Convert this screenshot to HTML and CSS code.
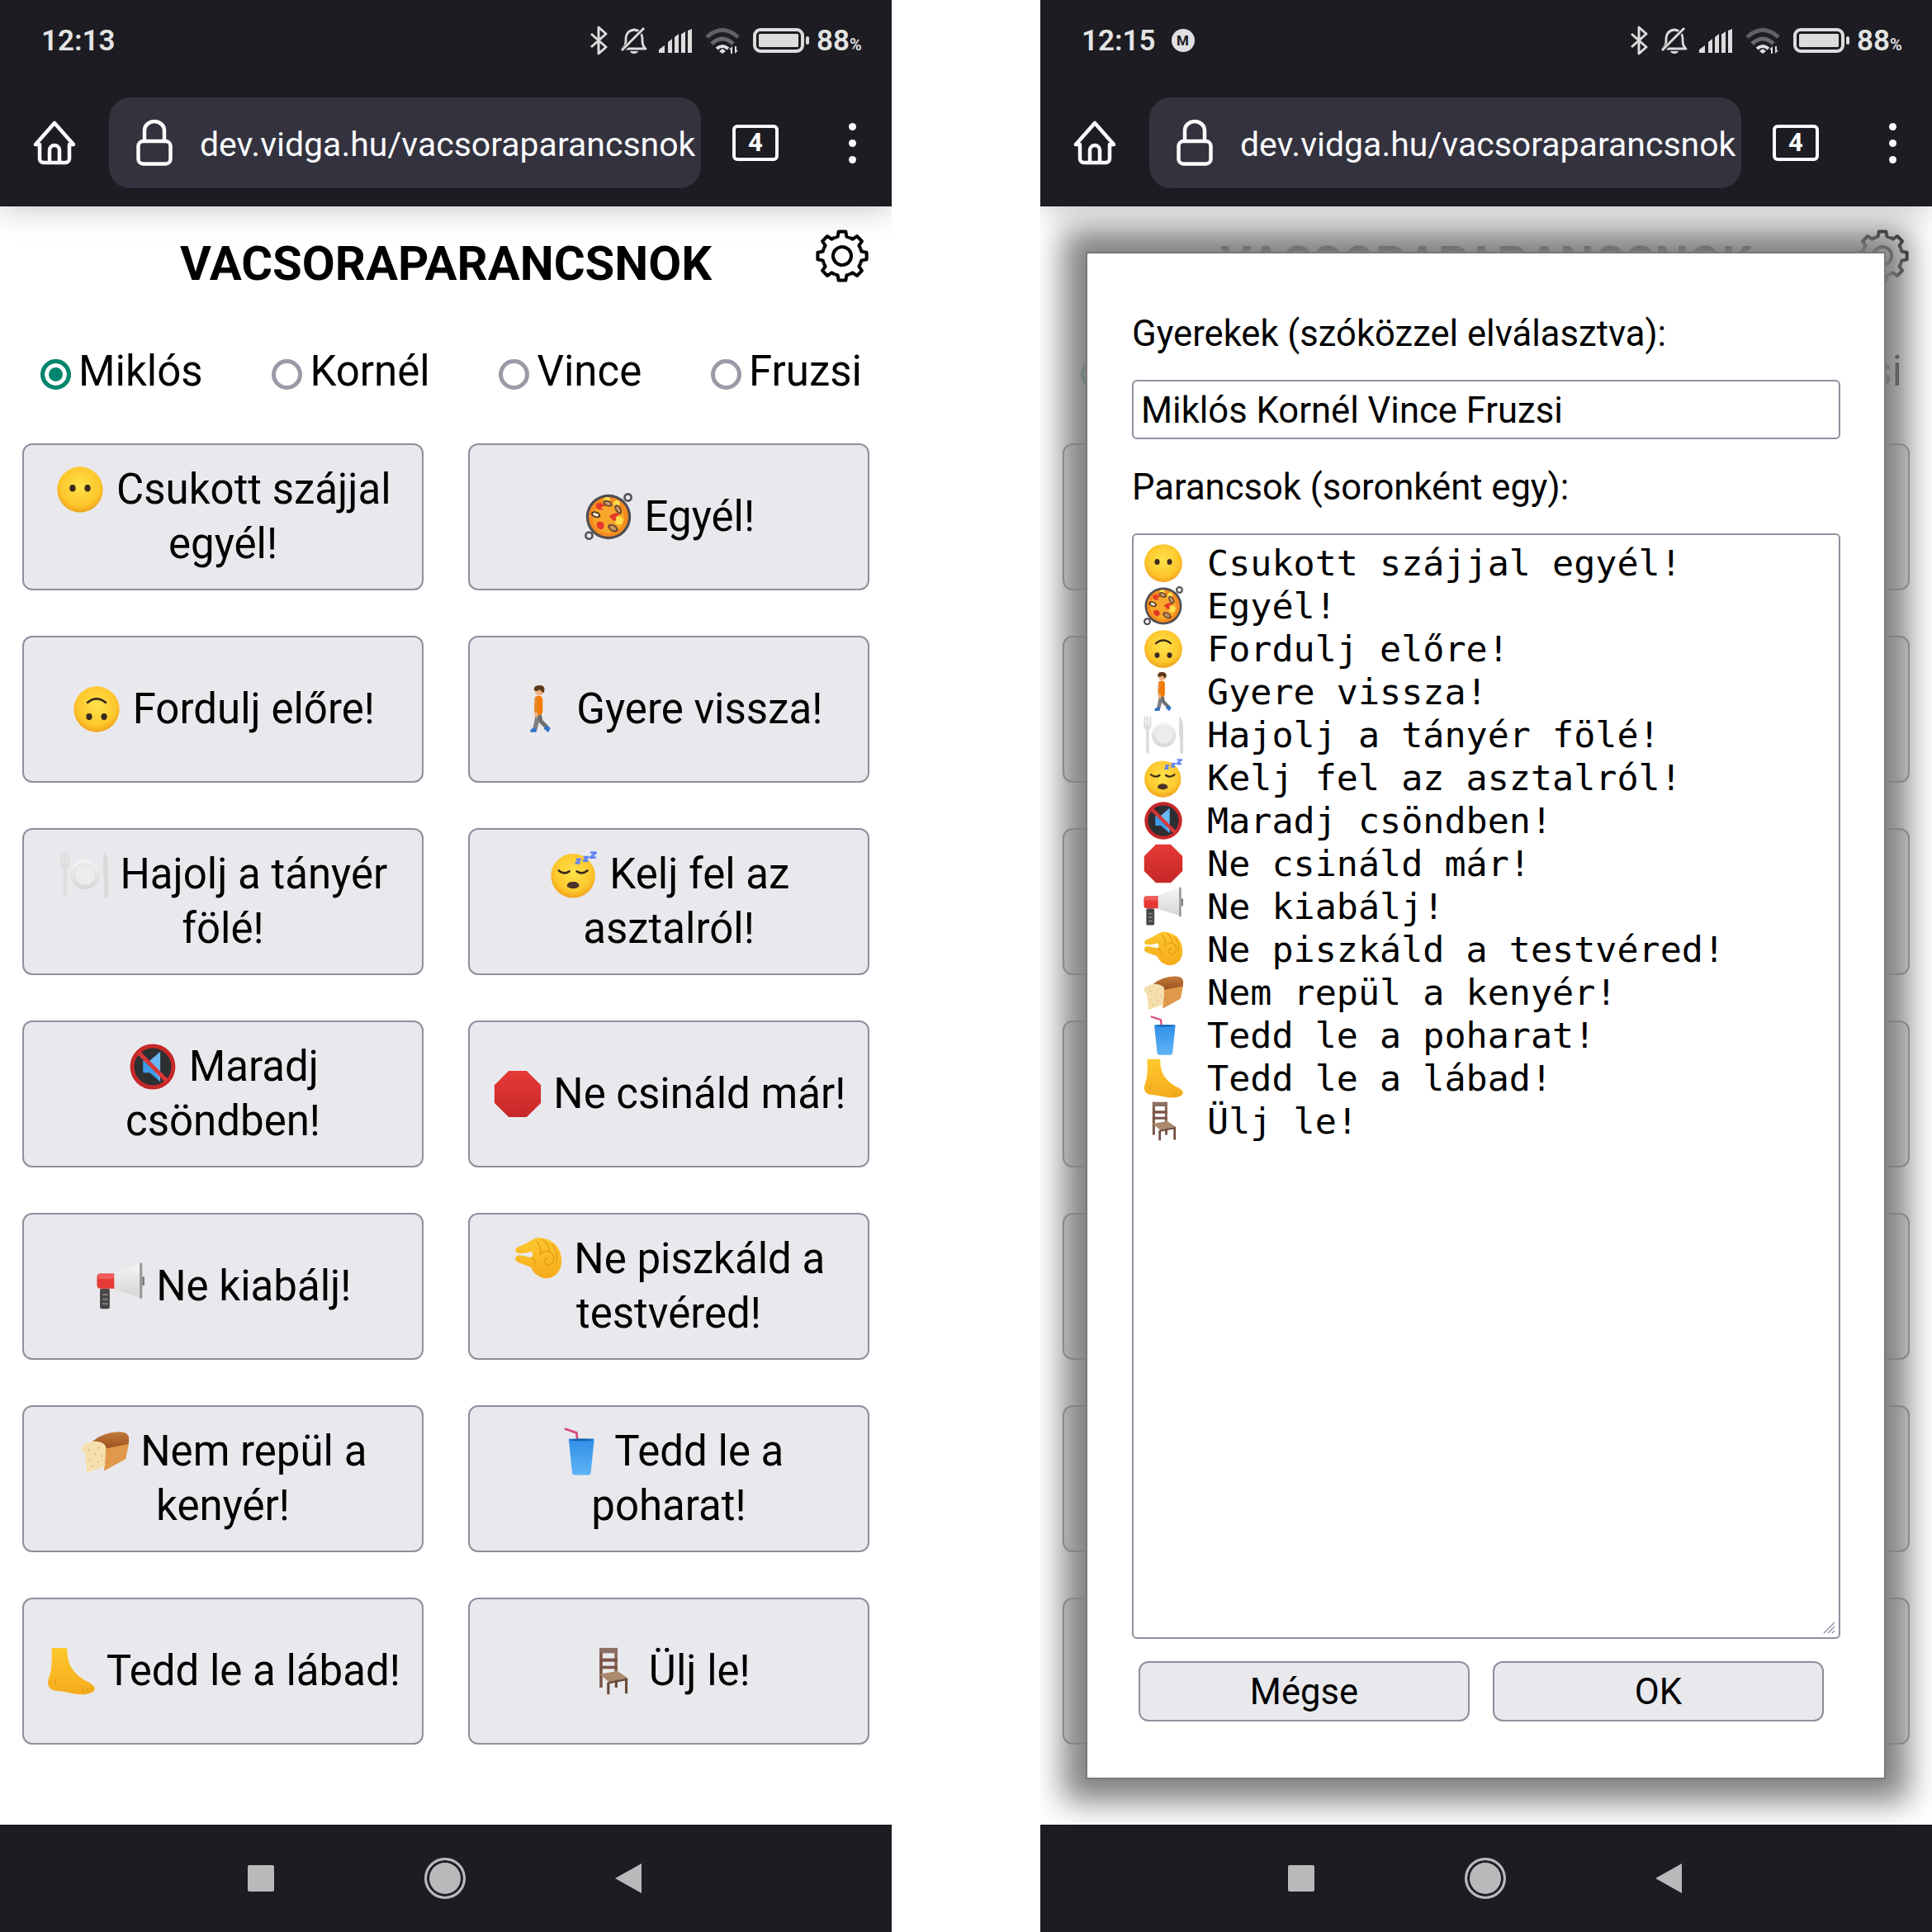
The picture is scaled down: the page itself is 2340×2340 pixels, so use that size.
FILE: index.html
```html
<!DOCTYPE html>
<html lang="hu">
<head>
<meta charset="utf-8">
<title>Vacsoraparancsnok</title>
<link rel="stylesheet" href="styles.css">
</head>
<body>
<svg class="sprite" xmlns="http://www.w3.org/2000/svg">
  <defs>
    <radialGradient id="fy" cx="50%" cy="42%" r="60%"><stop offset="0" stop-color="#ffe24a"/><stop offset=".72" stop-color="#fdc72c"/><stop offset="1" stop-color="#f09c1a"/></radialGradient>
    <linearGradient id="rd" x1="0" y1="0" x2="0" y2="1"><stop offset="0" stop-color="#e53935"/><stop offset="1" stop-color="#c62828"/></linearGradient>
    <linearGradient id="bl" x1="0" y1="0" x2="0" y2="1"><stop offset="0" stop-color="#2f8fe8"/><stop offset="1" stop-color="#5fb4f5"/></linearGradient>
    <linearGradient id="cr" x1="0" y1="0" x2="0" y2="1"><stop offset="0" stop-color="#c27a3a"/><stop offset="1" stop-color="#9c5220"/></linearGradient>
    <linearGradient id="ft" x1="0" y1="0" x2="0" y2="1"><stop offset="0" stop-color="#fdc82e"/><stop offset="1" stop-color="#f5ab1c"/></linearGradient>
    <linearGradient id="hr" x1="0" y1="0" x2="0" y2="1"><stop offset="0" stop-color="#f5f5f5"/><stop offset="1" stop-color="#d6d6d6"/></linearGradient>
    <symbol id="e-mute" viewBox="0 0 128 128"><circle cx="64" cy="64" r="61" fill="url(#fy)"/><ellipse cx="44" cy="60" rx="8" ry="9.5" fill="#3a2a20"/><ellipse cx="84" cy="60" rx="8" ry="9.5" fill="#3a2a20"/></symbol>
    <symbol id="e-paella" viewBox="0 0 128 128"><circle cx="12" cy="114" r="9" fill="none" stroke="#55555a" stroke-width="6"/><circle cx="116" cy="12" r="9" fill="none" stroke="#55555a" stroke-width="6"/><circle cx="64" cy="64" r="60" fill="#4e4e52"/><circle cx="64" cy="64" r="53" fill="#f58a1f"/><circle cx="64" cy="66" r="42" fill="#f7a72a"/><circle cx="92" cy="74" r="11" fill="#fde04b"/><circle cx="60" cy="20" r="9" fill="#fde04b"/><circle cx="86" cy="28" r="8" fill="#fde04b"/><path d="M30 30q16-8 26 6q-8-2-12 4q2 4 8 4q-14 4-20-4zM66 62q14-12 28-6q-6 6-12 8q4 2 2 10q-10 2-12-6q-4 0-6-6zM34 78q14-4 18 6q2 8-6 14q-10-2-14-10q0-6 2-10z" fill="#e5382b"/><ellipse cx="62" cy="28" rx="13" ry="8" fill="#6b4630" transform="rotate(20 62 28)"/><ellipse cx="62" cy="28" rx="8" ry="4" fill="#c9986a" transform="rotate(20 62 28)"/><ellipse cx="90" cy="44" rx="14" ry="8" fill="#6b4630" transform="rotate(60 90 44)"/><ellipse cx="90" cy="44" rx="9" ry="4" fill="#c9986a" transform="rotate(60 90 44)"/><ellipse cx="30" cy="58" rx="13" ry="8" fill="#4e3526" transform="rotate(20 30 58)"/><ellipse cx="30" cy="58" rx="8" ry="4" fill="#fff0d0" transform="rotate(20 30 58)"/><ellipse cx="76" cy="94" rx="15" ry="9" fill="#6b4630" transform="rotate(30 76 94)"/><ellipse cx="76" cy="94" rx="9" ry="5" fill="#c9986a" transform="rotate(30 76 94)"/></symbol>
    <symbol id="e-upside" viewBox="0 0 128 128"><circle cx="64" cy="64" r="61" fill="url(#fy)"/><ellipse cx="44" cy="84" rx="8" ry="9" fill="#3a2a20"/><ellipse cx="84" cy="84" rx="8" ry="9" fill="#3a2a20"/><path d="M40 46q24-20 48 0" fill="none" stroke="#3a2a20" stroke-width="6" stroke-linecap="round"/></symbol>
    <symbol id="e-walk" viewBox="0 0 128 128"><path d="M56 78L52 102L48 118" fill="none" stroke="#7f7f7f" stroke-width="12" stroke-linecap="round" stroke-linejoin="round"/><path d="M60 78L64 96L82 114" fill="none" stroke="#6f6f6f" stroke-width="11" stroke-linecap="round" stroke-linejoin="round"/><path d="M36 120q2-6 16-6v11H36zM78 108l12 6l-6 12q-6-4-12-10z" fill="#2f74c8"/><rect x="48" y="28" width="21" height="52" rx="10" fill="#f57c00"/><path d="M52 34L50 60L52 76" fill="none" stroke="#e5892f" stroke-width="8" stroke-linecap="round"/><path d="M52 76L52 82" stroke="#f2b183" stroke-width="8" stroke-linecap="round"/><circle cx="60" cy="15" r="12" fill="#f2b183"/><path d="M46 14q-2-14 14-14q14 0 14 12q-1 8-6 8q-2-8-10-8q-2 6-12 2z" fill="#5d3a1a"/></symbol>
    <symbol id="e-plate" viewBox="0 0 128 128"><path d="M1 8q0-4 3-4t3 4v24h3V6q0-3 3-3t3 3v26h3V8q0-4 3-4t3 4v26q0 10-7 13v72q0 6-5 6t-5-6V47q-8-3-8-13z" fill="#dedede"/><circle cx="66" cy="64" r="40" fill="url(#hr)"/><circle cx="66" cy="64" r="29" fill="#ececec" stroke="#dcdcdc" stroke-width="2"/><path d="M116 4q12 8 12 44v72q0 6-5 6t-5-6V72h-3q-1-40 1-68z" fill="#d9d9d9"/></symbol>
    <symbol id="e-sleep" viewBox="0 0 128 128"><circle cx="62" cy="68" r="59" fill="url(#fy)"/><path d="M24 54q14 12 28 2M72 56q14 10 28-2" fill="none" stroke="#3a2a20" stroke-width="6" stroke-linecap="round"/><path d="M46 98q0-14 16-14t16 14q-8-4-16-4t-16 4z" fill="#4a3328"/><ellipse cx="62" cy="93" rx="16" ry="9" fill="#4a3328"/><path d="M70 24h11l-11 10h11M90 18h12l-12 10h12M108 6h15l-15 13h15" fill="none" stroke="#6585f2" stroke-width="6" stroke-linejoin="round"/></symbol>
    <symbol id="e-muted" viewBox="0 0 128 128"><circle cx="64" cy="64" r="55" fill="#2d2f33" stroke="#c62828" stroke-width="11"/><path d="M38 48h18l28-24v80L56 80H38z" fill="#3f9be8"/><path d="M56 48l28-24v80z" fill="#6bb8f3"/><path d="M26 26L102 102" stroke="#d93636" stroke-width="11"/></symbol>
    <symbol id="e-stop" viewBox="0 0 128 128"><path d="M40 2h48l38 38v48l-38 38H40L2 88V40z" fill="url(#rd)"/></symbol>
    <symbol id="e-mega" viewBox="0 0 128 128"><rect x="9" y="70" width="26" height="54" rx="5" fill="#454545"/><path d="M16 84h14v5H16zM16 96h14v5H16zM16 108h14v5H16z" fill="#7d7d7d"/><path d="M1 40q0-10 10-10h38v40H11q-10 0-10-10z" fill="#e53935"/><path d="M6 32h43v12H4q0-8 2-12z" fill="#ef5d5a"/><path d="M47 28L118 2v92L47 72z" fill="url(#hr)"/><rect x="115" y="1" width="7" height="96" rx="3" fill="#9a9a9a"/><rect x="122" y="38" width="6" height="24" rx="1" fill="#7d7d7d"/></symbol>
    <symbol id="e-pinch" viewBox="0 0 128 128"><path d="M3 42Q2 34 12 31Q30 24 45 14Q60 4 76 8Q110 14 122 44Q132 76 118 98Q100 120 76 114Q54 108 44 86Q30 80 12 74Q0 68 3 60Q6 52 18 54L46 60Q52 50 46 44Q24 50 10 48Q4 47 3 42Z" fill="url(#ft)"/><path d="M58 16Q72 28 70 48M76 12Q92 24 94 44M68 52Q84 36 100 48Q112 62 100 76Q86 84 80 72Q80 62 90 62M46 60Q56 66 58 78M100 24Q118 44 112 72" fill="none" stroke="#e89d18" stroke-width="3.5" stroke-linecap="round"/></symbol>
    <symbol id="e-bread" viewBox="0 0 128 128"><path d="M66 52L128 42L120 84L62 116z" fill="#e0984a"/><path d="M30 38Q50 20 80 14Q112 8 124 18Q132 28 127 44L66 56Q64 46 50 40z" fill="url(#cr)"/><path d="M2 54Q4 44 20 40Q44 32 62 44Q70 52 66 60L64 104L16 120L10 68Q2 64 2 54Z" fill="#f6dfae"/><g fill="#d6a862"><circle cx="22" cy="60" r="2"/><circle cx="38" cy="72" r="2"/><circle cx="24" cy="88" r="2"/><circle cx="48" cy="54" r="2"/><circle cx="46" cy="92" r="2"/><circle cx="30" cy="104" r="2"/><circle cx="56" cy="76" r="2"/></g></symbol>
    <symbol id="e-cup" viewBox="0 0 128 128"><path d="M58 34L56 14L26 4" fill="none" stroke="#d8487e" stroke-width="6" stroke-linejoin="round" stroke-linecap="round"/><path d="M35 32q0-2 3-2h62q3 0 3 2l-9 88q-1 7-8 7H52q-7 0-8-7z" fill="url(#bl)"/><ellipse cx="69" cy="33" rx="30" ry="3" fill="#1565a8"/></symbol>
    <symbol id="e-foot" viewBox="0 0 128 128"><path d="M12 2H50Q54 2 54 8Q54 36 66 56Q78 74 100 88Q124 98 128 110Q128 122 104 126Q90 128 70 124Q40 118 18 116Q2 110 2 94Q4 80 10 66Q14 40 12 2Z" fill="url(#ft)"/><path d="M94 110q2 8 6 12M106 110q0 6 4 10M117 110q0 4 2 8M24 86q-6 6 0 12" fill="none" stroke="#e39a13" stroke-width="3" stroke-linecap="round"/></symbol>
    <symbol id="e-chair" viewBox="0 0 128 128"><rect x="70" y="78" width="7" height="30" fill="#6b4a3b"/><rect x="29" y="2" width="8" height="106" fill="#7a5546"/><rect x="69" y="2" width="8" height="68" fill="#8a6656"/><rect x="29" y="2" width="48" height="14" fill="#8d6e63"/><rect x="29" y="30" width="48" height="9" fill="#7a5546"/><rect x="29" y="50" width="48" height="8" fill="#7a5546"/><path d="M29 72L77 64L104 82L53 92z" fill="#ad8a6c"/><path d="M53 92L104 82V88L53 98z" fill="#6b4a3b"/><rect x="49" y="94" width="7" height="32" fill="#6b4a3b"/><rect x="97" y="86" width="7" height="38" fill="#6b4a3b"/></symbol>
    <symbol id="i-gear" viewBox="0 0 66 66"><path id="t0" d="M23.8 10.8L27.6 9.6L28.7 3.4L37.3 3.4L38.4 9.6L42.2 10.8" fill="none" stroke="currentColor" stroke-width="4" stroke-linejoin="round"/><use href="#t0" transform="rotate(45 33 33)"/><use href="#t0" transform="rotate(90 33 33)"/><use href="#t0" transform="rotate(135 33 33)"/><use href="#t0" transform="rotate(180 33 33)"/><use href="#t0" transform="rotate(225 33 33)"/><use href="#t0" transform="rotate(270 33 33)"/><use href="#t0" transform="rotate(315 33 33)"/><circle cx="33" cy="33" r="11" fill="none" stroke="currentColor" stroke-width="4"/></symbol>
    <symbol id="i-bt" viewBox="0 0 23 36"><path d="M2 10L20 26L11 34V2L20 10L2 26" fill="none" stroke="#dcdcdc" stroke-width="3" stroke-linejoin="round"/></symbol>
    <symbol id="i-bell" viewBox="0 0 32 34"><path d="M2 27q4-3 4-10V14Q7 5 16 4q9 1 10 10v3q0 7 4 10z" fill="none" stroke="#dcdcdc" stroke-width="2.8" stroke-linejoin="round"/><path d="M11 30h10q-1 3-5 3t-5-3z" fill="#dcdcdc"/><path d="M1 30L29 1" stroke="#1c1c22" stroke-width="5"/><path d="M1 29L28 2" stroke="#dcdcdc" stroke-width="2.8"/></symbol>
    <symbol id="i-signal" viewBox="0 0 40 29"><path d="M0 29v-4l7-5v9zM11 29V16l5-4v17zM19 29V10l5-4v23zM27 29V6h1l4-3v26zM35 29V2l5-2v29z" fill="#dcdcdc"/></symbol>
    <symbol id="i-wifi" viewBox="0 0 43 31"><path d="M2 11Q21-6 40 11" fill="none" stroke="#606066" stroke-width="5"/><path d="M8 19Q21 7 34 19" fill="none" stroke="#68686e" stroke-width="5"/><path d="M14 25Q21 19 28 25" fill="none" stroke="#e0e0e0" stroke-width="4"/><path d="M17 28l4-3l4 3l-4 3z" fill="#e0e0e0"/><path d="M33 22v9h-2v-5h-2zM36 31v-9h2v5h2z" fill="#dcdcdc"/></symbol>
    <symbol id="i-bat" viewBox="0 0 68 30"><rect x="2" y="2" width="58" height="26" rx="7" fill="none" stroke="#dcdcdc" stroke-width="4"/><rect x="7" y="7" width="48" height="16" rx="1.5" fill="#dcdcdc"/><rect x="64" y="10" width="4" height="10" rx="2" fill="#dcdcdc"/></symbol>
    <symbol id="i-home" viewBox="0 0 54 54"><path d="M27 3L4 29H9V46a5 5 0 0 0 5 5H40a5 5 0 0 0 5-5V29H50z" fill="none" stroke="#fbfbfe" stroke-width="4.5" stroke-linejoin="round"/><path d="M21 51V36a6 6 0 0 1 12 0V51" fill="none" stroke="#fbfbfe" stroke-width="4.5"/></symbol>
    <symbol id="i-lock" viewBox="0 0 44 56"><rect x="2.5" y="26" width="39" height="27.5" rx="6" fill="none" stroke="#fbfbfe" stroke-width="4.5"/><path d="M10 26V13a12 11 0 0 1 24 0V26" fill="none" stroke="#fbfbfe" stroke-width="4.5"/></symbol>
    <symbol id="i-rez" viewBox="0 0 15 15"><path d="M1 14L14 1M6 14L14 6M11 14L14 11" stroke="#8f8f9d" stroke-width="1.4"/></symbol>
  </defs>
</svg>

<div class="screens">

<section class="phone">
  <header class="chrome">
    <div class="status">
      <div class="status-left"><span class="time">12:13</span></div>
      <div class="status-right">
        <svg class="ic-bt"><use href="#i-bt"/></svg>
        <svg class="ic-bell"><use href="#i-bell"/></svg>
        <svg class="ic-signal"><use href="#i-signal"/></svg>
        <svg class="ic-wifi"><use href="#i-wifi"/></svg>
        <svg class="ic-bat"><use href="#i-bat"/></svg>
        <span class="pct">88<small>%</small></span>
      </div>
    </div>
    <div class="toolbar">
      <svg class="ic-home"><use href="#i-home"/></svg>
      <div class="urlbar"><svg class="ic-lock"><use href="#i-lock"/></svg><span class="url">dev.vidga.hu/vacsoraparancsnok</span></div>
      <span class="tabs">4</span>
      <div class="dots"><i></i><i></i><i></i></div>
    </div>
  </header>
  <main class="app">
    <h1 class="title">VACSORAPARANCSNOK</h1>
    <svg class="gear"><use href="#i-gear"/></svg>
    <div class="kids">
      <label class="kid"><input type="radio" name="a" checked>Miklós</label>
      <label class="kid"><input type="radio" name="a">Kornél</label>
      <label class="kid"><input type="radio" name="a">Vince</label>
      <label class="kid"><input type="radio" name="a">Fruzsi</label>
    </div>
    <div class="cmds">
      <button class="cmd"><svg class="emo"><use href="#e-mute"/></svg> Csukott szájjal egyél!</button>
      <button class="cmd"><svg class="emo"><use href="#e-paella"/></svg> Egyél!</button>
      <button class="cmd"><svg class="emo"><use href="#e-upside"/></svg> Fordulj előre!</button>
      <button class="cmd"><svg class="emo"><use href="#e-walk"/></svg> Gyere vissza!</button>
      <button class="cmd"><svg class="emo"><use href="#e-plate"/></svg> Hajolj a tányér fölé!</button>
      <button class="cmd"><svg class="emo"><use href="#e-sleep"/></svg> Kelj fel az asztalról!</button>
      <button class="cmd"><svg class="emo"><use href="#e-muted"/></svg> Maradj csöndben!</button>
      <button class="cmd"><svg class="emo"><use href="#e-stop"/></svg> Ne csináld már!</button>
      <button class="cmd"><svg class="emo"><use href="#e-mega"/></svg> Ne kiabálj!</button>
      <button class="cmd"><svg class="emo"><use href="#e-pinch"/></svg> Ne piszkáld a testvéred!</button>
      <button class="cmd"><svg class="emo"><use href="#e-bread"/></svg> Nem repül a kenyér!</button>
      <button class="cmd"><svg class="emo"><use href="#e-cup"/></svg> Tedd le a poharat!</button>
      <button class="cmd"><svg class="emo"><use href="#e-foot"/></svg> Tedd le a lábad!</button>
      <button class="cmd"><svg class="emo"><use href="#e-chair"/></svg> Ülj le!</button>
    </div>
  </main>
  <footer class="nav">
    <span class="nav-square"></span>
    <span class="nav-circle"></span>
    <span class="nav-back"></span>
  </footer>
</section>

<section class="phone">
  <header class="chrome">
    <div class="status">
      <div class="status-left"><span class="time">12:15</span><span class="mbadge">M</span></div>
      <div class="status-right">
        <svg class="ic-bt"><use href="#i-bt"/></svg>
        <svg class="ic-bell"><use href="#i-bell"/></svg>
        <svg class="ic-signal"><use href="#i-signal"/></svg>
        <svg class="ic-wifi"><use href="#i-wifi"/></svg>
        <svg class="ic-bat"><use href="#i-bat"/></svg>
        <span class="pct">88<small>%</small></span>
      </div>
    </div>
    <div class="toolbar">
      <svg class="ic-home"><use href="#i-home"/></svg>
      <div class="urlbar"><svg class="ic-lock"><use href="#i-lock"/></svg><span class="url">dev.vidga.hu/vacsoraparancsnok</span></div>
      <span class="tabs">4</span>
      <div class="dots"><i></i><i></i><i></i></div>
    </div>
  </header>
  <main class="app">
    <h1 class="title">VACSORAPARANCSNOK</h1>
    <svg class="gear"><use href="#i-gear"/></svg>
    <div class="kids">
      <label class="kid"><input type="radio" name="b" checked>Miklós</label>
      <label class="kid"><input type="radio" name="b">Kornél</label>
      <label class="kid"><input type="radio" name="b">Vince</label>
      <label class="kid"><input type="radio" name="b">Fruzsi</label>
    </div>
    <div class="cmds">
      <button class="cmd"></button><button class="cmd"></button>
      <button class="cmd"></button><button class="cmd"></button>
      <button class="cmd"></button><button class="cmd"></button>
      <button class="cmd"></button><button class="cmd"></button>
      <button class="cmd"></button><button class="cmd"></button>
      <button class="cmd"></button><button class="cmd"></button>
      <button class="cmd"></button><button class="cmd"></button>
    </div>
    <div class="modal">
      <label class="field-label">Gyerekek (szóközzel elválasztva):</label>
      <input class="field-input" type="text" value="Miklós Kornél Vince Fruzsi">
      <label class="field-label field-label-2">Parancsok (soronként egy):</label>
      <div class="textarea">
        <div class="ln"><svg class="emo-m"><use href="#e-mute"/></svg> Csukott szájjal egyél!</div>
        <div class="ln"><svg class="emo-m"><use href="#e-paella"/></svg> Egyél!</div>
        <div class="ln"><svg class="emo-m"><use href="#e-upside"/></svg> Fordulj előre!</div>
        <div class="ln"><svg class="emo-m"><use href="#e-walk"/></svg> Gyere vissza!</div>
        <div class="ln"><svg class="emo-m"><use href="#e-plate"/></svg> Hajolj a tányér fölé!</div>
        <div class="ln"><svg class="emo-m"><use href="#e-sleep"/></svg> Kelj fel az asztalról!</div>
        <div class="ln"><svg class="emo-m"><use href="#e-muted"/></svg> Maradj csöndben!</div>
        <div class="ln"><svg class="emo-m"><use href="#e-stop"/></svg> Ne csináld már!</div>
        <div class="ln"><svg class="emo-m"><use href="#e-mega"/></svg> Ne kiabálj!</div>
        <div class="ln"><svg class="emo-m"><use href="#e-pinch"/></svg> Ne piszkáld a testvéred!</div>
        <div class="ln"><svg class="emo-m"><use href="#e-bread"/></svg> Nem repül a kenyér!</div>
        <div class="ln"><svg class="emo-m"><use href="#e-cup"/></svg> Tedd le a poharat!</div>
        <div class="ln"><svg class="emo-m"><use href="#e-foot"/></svg> Tedd le a lábad!</div>
        <div class="ln"><svg class="emo-m"><use href="#e-chair"/></svg> Ülj le!</div>
        <svg class="resizer"><use href="#i-rez"/></svg>
      </div>
      <div class="modal-actions">
        <button class="act">Mégse</button>
        <button class="act">OK</button>
      </div>
    </div>
  </main>
  <footer class="nav">
    <span class="nav-square"></span>
    <span class="nav-circle"></span>
    <span class="nav-back"></span>
  </footer>
</section>

</div>
</body>
</html>
```

FILE: styles.css
```css
* { box-sizing: border-box; }
html, body { margin: 0; padding: 0; background: #fff; }
body { width: 2340px; height: 2340px; overflow: hidden; font-family: Roboto, "Liberation Sans", sans-serif; color: #000; }
.sprite { position: absolute; width: 0; height: 0; overflow: hidden; }
.screens { display: flex; gap: 180px; width: 2340px; height: 2340px; }
.phone { width: 1080px; height: 2340px; display: flex; flex-direction: column; background: #fff; overflow: hidden; }

/* browser chrome */
.chrome { height: 250px; flex: none; background: #1c1c22; position: relative; z-index: 3; box-shadow: 0 4px 36px rgba(0,0,0,.22); }
.status { height: 118px; padding: 0 38px 20px 50px; display: flex; align-items: center; justify-content: space-between; }
.status-left { display: flex; align-items: center; gap: 19px; }
.time { font-size: 35px; font-weight: 600; color: #e4e4e4; }
.mbadge { width: 28px; height: 28px; border-radius: 50%; background: #e0e0e0; color: #1c1c22; font-size: 17px; font-weight: 700; line-height: 28px; text-align: center; }
.status-right { display: flex; align-items: center; }
.ic-bt { width: 23px; height: 36px; }
.ic-bell { width: 32px; height: 34px; margin-left: 15px; }
.ic-signal { width: 40px; height: 29px; margin-left: 14px; }
.ic-wifi { width: 43px; height: 31px; margin-left: 16px; }
.ic-bat { width: 68px; height: 30px; margin-left: 15px; }
.pct { font-size: 35px; font-weight: 600; color: #e4e4e4; margin-left: 9px; width: 53px; white-space: nowrap; }
.pct small { font-size: 20px; }
.toolbar { height: 110px; display: flex; align-items: center; padding-left: 39px; }
.ic-home { width: 54px; height: 54px; flex: none; }
.urlbar { width: 717px; height: 110px; margin-left: 39px; border-radius: 26px; background: #33323e; display: flex; align-items: center; padding-left: 33px; overflow: hidden; flex: none; }
.ic-lock { width: 44px; height: 56px; flex: none; }
.url { margin-left: 33px; padding-top: 4px; font-size: 41px; color: #fbfbfe; white-space: nowrap; }
.tabs { width: 56px; height: 44px; margin-left: 38px; border: 4px solid #fbfbfe; border-radius: 6px; color: #fbfbfe; font-size: 31px; font-weight: 700; text-align: center; line-height: 36px; flex: none; }
.dots { margin-left: 85px; display: flex; flex-direction: column; gap: 11px; }
.dots i { display: block; width: 9px; height: 9px; border-radius: 50%; background: #fbfbfe; }

/* page */
.app { flex: 1; position: relative; overflow: hidden; padding: 0 27px; }
.title { margin: 34px 0 0; font-size: 58px; line-height: 70px; font-weight: 700; text-align: center; }
.gear { position: absolute; left: 987px; top: 26px; width: 66px; height: 68px; color: #000; }
.kids { margin-top: 66px; padding: 0 9px 0 22px; height: 60px; display: flex; align-items: center; justify-content: space-between; }
.kid { display: flex; align-items: center; gap: 9px; font-size: 51px; line-height: 60px; }
.kid input { appearance: none; -webkit-appearance: none; width: 37px; height: 37px; margin: 7px 0 0; border: 5px solid #9a9aa8; border-radius: 50%; background: #fff; flex: none; }
.kid input:checked { border-color: #00856f; background: #00856f; box-shadow: inset 0 0 0 5px #fff; }
.cmds { margin-top: 57px; display: grid; grid-template-columns: 1fr 1fr; column-gap: 54px; grid-auto-rows: 178px; row-gap: 55px; }
.cmd { font-family: inherit; font-size: 51px; line-height: 66px; color: #000; background: #e9e9ed; border: 2px solid #8f8f9d; border-radius: 12px; padding: 0 20px; text-align: center; }
.emo { width: 58px; height: 58px; margin: 0 2px; vertical-align: -12px; }

/* navigation */
.nav { height: 130px; flex: none; background: #1c1c22; position: relative; z-index: 3; display: flex; align-items: center; padding-left: 300px; }
.nav-square { width: 32px; height: 32px; border-radius: 2px; background: #b9b9bb; }
.nav-circle { width: 50px; height: 50px; margin-left: 182px; border-radius: 50%; border: 3px solid #b9b9bb; background: #b9b9bb; box-shadow: inset 0 0 0 3px #1c1c22; }
.nav-back { width: 0; height: 0; margin-left: 181px; border-style: solid; border-width: 18px 32px 18px 0; border-color: transparent #b9b9bb transparent transparent; }

/* settings dialog */
.modal { position: absolute; left: 55px; top: 55px; width: 969px; height: 1850px; padding: 70px 54px 0; background: #fff; border: 2px solid #787878; box-shadow: 0 0 36px 27px #808080; display: flex; flex-direction: column; }
.field-label { font-size: 43.6px; line-height: 56px; }
.field-input { width: 858px; height: 72px; margin-top: 27px; padding: 3px 9px 0; font-family: inherit; font-size: 43.6px; color: #000; background: #fff; border: 2px solid #8f8f9d; border-radius: 6px; outline: none; flex: none; }
.field-label-2 { margin-top: 31px; }
.textarea { position: relative; width: 858px; height: 1339px; margin-top: 27px; padding: 8px 10px; border: 2px solid #8f8f9d; border-radius: 6px; font-family: "DejaVu Sans Mono", monospace; font-size: 43.4px; line-height: 52px; flex: none; }
.ln { height: 52px; white-space: pre; }
.emo-m { width: 48px; height: 48px; margin: 0 3px 0 2px; vertical-align: -9px; }
.resizer { position: absolute; right: 4px; bottom: 4px; width: 15px; height: 15px; }
.modal-actions { margin: 27px 0 0 8px; display: flex; gap: 28px; }
.act { width: 401px; height: 73px; font-family: inherit; font-size: 43.6px; color: #000; background: #e9e9ed; border: 2px solid #8f8f9d; border-radius: 12px; padding: 2px 0 0; }
```
